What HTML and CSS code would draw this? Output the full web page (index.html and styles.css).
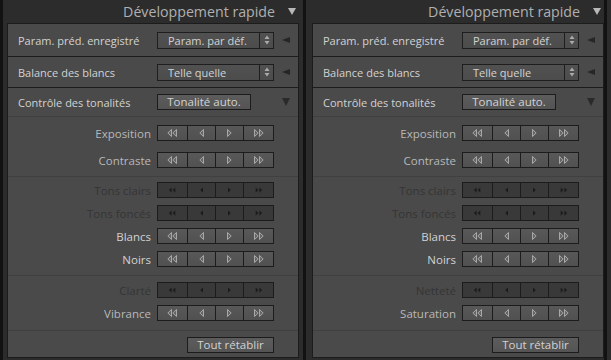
FILE: index.html
```html
<!DOCTYPE html>
<html lang="fr">
<head>
<meta charset="utf-8">
<title>Développement rapide</title>
<link rel="stylesheet" href="styles.css">
</head>
<body>
<svg class="defs" width="0" height="0" aria-hidden="true">
  <symbol id="ll" viewBox="0 0 10 8"><polygon points="4.5,0.5 0.8,4 4.5,7.5"/><polygon points="9.5,0.5 5.8,4 9.5,7.5"/></symbol>
  <symbol id="l" viewBox="0 0 5 8"><polygon points="4.5,0.5 0.8,4 4.5,7.5"/></symbol>
  <symbol id="r" viewBox="0 0 5 8"><polygon points="0.5,0.5 4.2,4 0.5,7.5"/></symbol>
  <symbol id="rr" viewBox="0 0 10 8"><polygon points="0.5,0.5 4.2,4 0.5,7.5"/><polygon points="5.5,0.5 9.2,4 5.5,7.5"/></symbol>
  <symbol id="ud" viewBox="0 0 6 10"><polygon points="3,0.5 5.5,4 0.5,4"/><polygon points="0.5,6 5.5,6 3,9.5"/></symbol>
</svg>
<div class="screen">
  <div class="edge"></div>
  <section class="shot shot-left">
    <header class="title"><span class="title-text">Développement rapide</span><span class="tri-down light"></span></header>
    <div class="panel">
      <div class="row row-preset">
        <span class="row-label">Param. préd. enregistré</span>
        <div class="select"><span class="select-text">Param. par déf.</span><span class="spin"><svg width="6" height="10"><use href="#ud"/></svg></span></div>
        <span class="tri-left"></span>
      </div>
      <div class="row row-wb">
        <span class="row-label">Balance des blancs</span>
        <div class="select"><span class="select-text">Telle quelle</span><span class="spin"><svg width="6" height="10"><use href="#ud"/></svg></span></div>
        <span class="tri-left"></span>
      </div>
      <div class="tone">
        <div class="tone-head">
          <span class="row-label">Contrôle des tonalités</span>
          <button class="btn btn-auto">Tonalité auto.</button>
          <span class="tri-down dark"></span>
        </div>
        <div class="group group-1">
          <div class="adj"><span class="adj-label">Exposition</span><div class="steps"><span class="step wide"><svg width="10" height="8"><use href="#ll"/></svg></span><span class="step"><svg width="5" height="8"><use href="#l"/></svg></span><span class="step"><svg width="5" height="8"><use href="#r"/></svg></span><span class="step wide"><svg width="10" height="8"><use href="#rr"/></svg></span></div></div>
          <div class="adj"><span class="adj-label">Contraste</span><div class="steps"><span class="step wide"><svg width="10" height="8"><use href="#ll"/></svg></span><span class="step"><svg width="5" height="8"><use href="#l"/></svg></span><span class="step"><svg width="5" height="8"><use href="#r"/></svg></span><span class="step wide"><svg width="10" height="8"><use href="#rr"/></svg></span></div></div>
        </div>
        <div class="group group-2">
          <div class="adj off"><span class="adj-label">Tons clairs</span><div class="steps"><span class="step wide"><svg width="10" height="8"><use href="#ll"/></svg></span><span class="step"><svg width="5" height="8"><use href="#l"/></svg></span><span class="step"><svg width="5" height="8"><use href="#r"/></svg></span><span class="step wide"><svg width="10" height="8"><use href="#rr"/></svg></span></div></div>
          <div class="adj off"><span class="adj-label">Tons foncés</span><div class="steps"><span class="step wide"><svg width="10" height="8"><use href="#ll"/></svg></span><span class="step"><svg width="5" height="8"><use href="#l"/></svg></span><span class="step"><svg width="5" height="8"><use href="#r"/></svg></span><span class="step wide"><svg width="10" height="8"><use href="#rr"/></svg></span></div></div>
          <div class="adj bright"><span class="adj-label">Blancs</span><div class="steps"><span class="step wide"><svg width="10" height="8"><use href="#ll"/></svg></span><span class="step"><svg width="5" height="8"><use href="#l"/></svg></span><span class="step"><svg width="5" height="8"><use href="#r"/></svg></span><span class="step wide"><svg width="10" height="8"><use href="#rr"/></svg></span></div></div>
          <div class="adj bright"><span class="adj-label">Noirs</span><div class="steps"><span class="step wide"><svg width="10" height="8"><use href="#ll"/></svg></span><span class="step"><svg width="5" height="8"><use href="#l"/></svg></span><span class="step"><svg width="5" height="8"><use href="#r"/></svg></span><span class="step wide"><svg width="10" height="8"><use href="#rr"/></svg></span></div></div>
        </div>
        <div class="group group-3">
          <div class="adj off"><span class="adj-label">Clarté</span><div class="steps"><span class="step wide"><svg width="10" height="8"><use href="#ll"/></svg></span><span class="step"><svg width="5" height="8"><use href="#l"/></svg></span><span class="step"><svg width="5" height="8"><use href="#r"/></svg></span><span class="step wide"><svg width="10" height="8"><use href="#rr"/></svg></span></div></div>
          <div class="adj"><span class="adj-label">Vibrance</span><div class="steps"><span class="step wide"><svg width="10" height="8"><use href="#ll"/></svg></span><span class="step"><svg width="5" height="8"><use href="#l"/></svg></span><span class="step"><svg width="5" height="8"><use href="#r"/></svg></span><span class="step wide"><svg width="10" height="8"><use href="#rr"/></svg></span></div></div>
        </div>
        <div class="group group-4">
          <button class="btn btn-reset">Tout rétablir</button>
        </div>
      </div>
    </div>
  </section>
  <div class="edge"></div>
  <section class="shot shot-right">
    <header class="title"><span class="title-text">Développement rapide</span><span class="tri-down light"></span></header>
    <div class="panel">
      <div class="row row-preset">
        <span class="row-label">Param. préd. enregistré</span>
        <div class="select"><span class="select-text">Param. par déf.</span><span class="spin"><svg width="6" height="10"><use href="#ud"/></svg></span></div>
        <span class="tri-left"></span>
      </div>
      <div class="row row-wb">
        <span class="row-label">Balance des blancs</span>
        <div class="select"><span class="select-text">Telle quelle</span><span class="spin"><svg width="6" height="10"><use href="#ud"/></svg></span></div>
        <span class="tri-left"></span>
      </div>
      <div class="tone">
        <div class="tone-head">
          <span class="row-label">Contrôle des tonalités</span>
          <button class="btn btn-auto">Tonalité auto.</button>
          <span class="tri-down dark"></span>
        </div>
        <div class="group group-1">
          <div class="adj"><span class="adj-label">Exposition</span><div class="steps"><span class="step wide"><svg width="10" height="8"><use href="#ll"/></svg></span><span class="step"><svg width="5" height="8"><use href="#l"/></svg></span><span class="step"><svg width="5" height="8"><use href="#r"/></svg></span><span class="step wide"><svg width="10" height="8"><use href="#rr"/></svg></span></div></div>
          <div class="adj"><span class="adj-label">Contraste</span><div class="steps"><span class="step wide"><svg width="10" height="8"><use href="#ll"/></svg></span><span class="step"><svg width="5" height="8"><use href="#l"/></svg></span><span class="step"><svg width="5" height="8"><use href="#r"/></svg></span><span class="step wide"><svg width="10" height="8"><use href="#rr"/></svg></span></div></div>
        </div>
        <div class="group group-2">
          <div class="adj off"><span class="adj-label">Tons clairs</span><div class="steps"><span class="step wide"><svg width="10" height="8"><use href="#ll"/></svg></span><span class="step"><svg width="5" height="8"><use href="#l"/></svg></span><span class="step"><svg width="5" height="8"><use href="#r"/></svg></span><span class="step wide"><svg width="10" height="8"><use href="#rr"/></svg></span></div></div>
          <div class="adj off"><span class="adj-label">Tons foncés</span><div class="steps"><span class="step wide"><svg width="10" height="8"><use href="#ll"/></svg></span><span class="step"><svg width="5" height="8"><use href="#l"/></svg></span><span class="step"><svg width="5" height="8"><use href="#r"/></svg></span><span class="step wide"><svg width="10" height="8"><use href="#rr"/></svg></span></div></div>
          <div class="adj bright"><span class="adj-label">Blancs</span><div class="steps"><span class="step wide"><svg width="10" height="8"><use href="#ll"/></svg></span><span class="step"><svg width="5" height="8"><use href="#l"/></svg></span><span class="step"><svg width="5" height="8"><use href="#r"/></svg></span><span class="step wide"><svg width="10" height="8"><use href="#rr"/></svg></span></div></div>
          <div class="adj bright"><span class="adj-label">Noirs</span><div class="steps"><span class="step wide"><svg width="10" height="8"><use href="#ll"/></svg></span><span class="step"><svg width="5" height="8"><use href="#l"/></svg></span><span class="step"><svg width="5" height="8"><use href="#r"/></svg></span><span class="step wide"><svg width="10" height="8"><use href="#rr"/></svg></span></div></div>
        </div>
        <div class="group group-3">
          <div class="adj off"><span class="adj-label">Netteté</span><div class="steps"><span class="step wide"><svg width="10" height="8"><use href="#ll"/></svg></span><span class="step"><svg width="5" height="8"><use href="#l"/></svg></span><span class="step"><svg width="5" height="8"><use href="#r"/></svg></span><span class="step wide"><svg width="10" height="8"><use href="#rr"/></svg></span></div></div>
          <div class="adj"><span class="adj-label">Saturation</span><div class="steps"><span class="step wide"><svg width="10" height="8"><use href="#ll"/></svg></span><span class="step"><svg width="5" height="8"><use href="#l"/></svg></span><span class="step"><svg width="5" height="8"><use href="#r"/></svg></span><span class="step wide"><svg width="10" height="8"><use href="#rr"/></svg></span></div></div>
        </div>
        <div class="group group-4">
          <button class="btn btn-reset">Tout rétablir</button>
        </div>
      </div>
    </div>
  </section>
  <div class="edge"></div>
  <div class="tail"></div>
</div>
</body>
</html>
```
FILE: styles.css
```css
* { box-sizing: border-box; }
html, body { margin: 0; padding: 0; }
body {
  width: 611px;
  height: 360px;
  overflow: hidden;
  background: #2c2c2c;
  font-family: "Open Sans", "DejaVu Sans", sans-serif;
}
.defs { position: absolute; width: 0; height: 0; overflow: hidden; }

.screen { display: flex; height: 360px; }
.edge { width: 3px; background: #121212; flex: none; }
.tail { width: 4px; background: #2c2c2c; flex: none; }

.shot { background: #2c2c2c; flex: none; height: 360px; }
.shot-left { width: 300px; padding-left: 4px; }
.shot-right { width: 298px; padding-left: 6px; }

.title {
  height: 23px;
  width: 292px;
  display: flex;
  justify-content: flex-end;
  align-items: center;
  padding-right: 3px;
  padding-bottom: 1px;
  color: #b0b0b0;
  font-size: 14.2px;
}
.title-text { margin-right: 13px; }
.tri-down {
  flex: none;
  width: 0; height: 0;
  border-left: 4.5px solid transparent;
  border-right: 4.5px solid transparent;
  border-top: 7px solid #b8b8b8;
}
.tri-down.dark { border-top-color: #2a2a2a; border-left-width: 4px; border-right-width: 4px; border-top-width: 8px; justify-self: center; margin-left: -1px; }

.panel {
  width: 292px;
  height: 335px;
  background: #4a4a4a;
  border: 1px solid #1c1c1c;
  display: flex;
  flex-direction: column;
}

.row, .tone-head {
  display: grid;
  grid-template-columns: 149px 117px 24px;
  align-items: center;
}
.row { border-bottom: 1px solid #1c1c1c; }
.row-preset { height: 33px; }
.row-wb { height: 31px; }
.row-label {
  padding-left: 10px;
  color: #d2d2d2;
  font-size: 11px;
  white-space: nowrap;
}
.tri-left {
  justify-self: center;
  margin-left: -1px;
  width: 0; height: 0;
  border-top: 3.5px solid transparent;
  border-bottom: 3.5px solid transparent;
  border-right: 8px solid #262626;
}

.select {
  height: 17px;
  display: flex;
  border: 1px solid #1e1e1e;
  background: linear-gradient(#515151, #4c4c4c);
  color: #d2d2d2;
  font-size: 11px;
}
.select-text {
  flex: 1;
  padding-left: 10px;
  line-height: 15px;
  white-space: nowrap;
}
.spin {
  width: 14px;
  border-left: 1px solid #1e1e1e;
  display: flex;
  align-items: center;
  justify-content: center;
  fill: #aaaaaa;
}

.tone { flex: 1; display: flex; flex-direction: column; }
.tone-head { height: 29px; border-bottom: 1px solid #404040; }

.btn {
  font-family: inherit;
  height: 16px;
  padding: 0;
  border: 1px solid #1c1c1c;
  background: linear-gradient(#5c5c5c, #545454);
  color: #d2d2d2;
  font-size: 11.5px;
  line-height: 14px;
  text-align: center;
}
.btn-auto { width: 94px; }
.btn-reset { width: 87px; }

.group { display: flex; flex-direction: column; gap: 7px; border-bottom: 1px solid #404040; }
.group-1 { gap: 11px; padding: 8px 0 8px; }
.group-2 { padding: 5px 0 8px; }
.group-3 { padding: 6px 0 9px; }
.group-4 { border-bottom: none; padding: 6px 0 0; align-items: flex-start; padding-left: 179px; }

.adj {
  display: grid;
  grid-template-columns: 149px 117px;
  align-items: center;
  height: 16px;
}
.adj-label {
  text-align: right;
  padding-right: 6px;
  font-size: 11.5px;
  color: #b8b8b8;
  white-space: nowrap;
}
.adj.bright .adj-label { color: #d2d2d2; }
.adj.off .adj-label { color: #353535; }

.steps {
  display: flex;
  height: 16px;
  border: 1px solid #1c1c1c;
  background: linear-gradient(#585858, #515151);
}
.step {
  flex: 28 1 0;
  display: flex;
  align-items: center;
  justify-content: center;
  border-left: 1px solid #1c1c1c;
  fill: #666666;
  stroke: #a8a8a8;
  stroke-width: 1;
}
.step:first-child { border-left: none; }
.step.wide { flex: 30 1 0; }
.adj.off .steps { background: #393939; }
.adj.off .step { fill: #1c1c1c; stroke: none; }
.adj.off .step svg { transform: scale(0.75); }
```
